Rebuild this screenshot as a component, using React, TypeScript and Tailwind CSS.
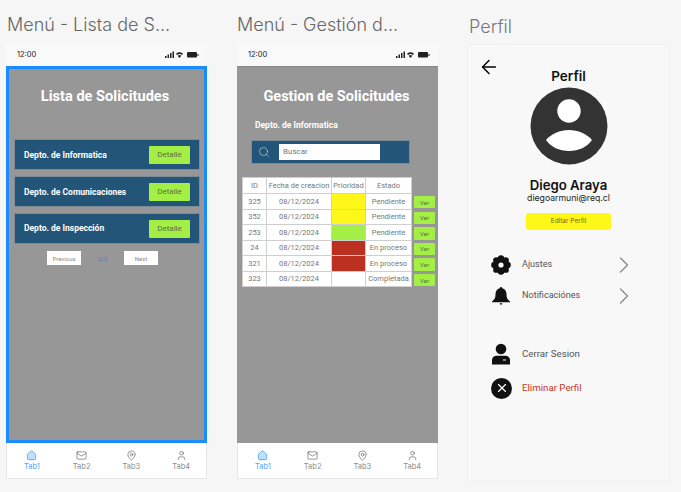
import { ArrowLeft, ChevronRight, House, Mail, MapPin, Search, User, X } from "lucide-react";

const FILAS = [
  { id: "325", prioridad: "bg-[#fff71a]", estado: "Pendiente" },
  { id: "352", prioridad: "bg-[#fff71a]", estado: "Pendiente" },
  { id: "253", prioridad: "bg-[#a3ef45]", estado: "Pendiente" },
  { id: "24", prioridad: "bg-[#bb3021]", estado: "En proceso" },
  { id: "321", prioridad: "bg-[#bb3021]", estado: "En proceso" },
  { id: "323", prioridad: "bg-white", estado: "Completada" },
];

const DEPTOS = ["Depto. de Informatica", "Depto. de Comunicaciones", "Depto. de Inspección"];

const TABS = [
  { label: "Tab1", Icon: House },
  { label: "Tab2", Icon: Mail },
  { label: "Tab3", Icon: MapPin },
  { label: "Tab4", Icon: User },
];

function StatusBar() {
  return (
    <div className="flex h-[22px] items-center justify-between bg-[#f9f9f9] pl-[11px] pr-[8px] font-['Inter',sans-serif] text-[7.5px] text-[#222]">
      <span>12:00</span>
      <svg width="34" height="8" viewBox="0 0 34 8" fill="#222" aria-hidden>
        <rect x="0" y="5" width="1.5" height="2" />
        <rect x="2.5" y="3.5" width="1.5" height="3.5" />
        <rect x="5" y="2" width="1.5" height="5" />
        <rect x="7.5" y="0.5" width="1.5" height="6.5" />
        <path d="M11 2.8a5.5 5.5 0 0 1 7 0l-1 1.1a4 4 0 0 0-5 0zM12.7 4.700a3 3 0 0 1 3.600 0L14.500 7z" />
        <rect x="22" y="1" width="10" height="5.5" rx="1" />
        <rect x="32.5" y="3" width="1" height="2" />
      </svg>
    </div>
  );
}

function TabBar() {
  return (
    <div className="flex h-[36px] items-start border-x border-b border-[#e6e6e6] bg-white pt-[7px] font-['Inter',sans-serif] text-[7.5px] leading-[10px] text-[#8c8c8c]">
      {TABS.map(({ label, Icon }, i) => (
        <div key={label} className={i === 0 ? "flex w-[50px] flex-col items-center gap-[1px] text-[#4aa5ff]" : "flex w-[50px] flex-col items-center gap-[1px]"}>
          <Icon
            size={11}
            strokeWidth={1.3}
            className={i === 0 ? "fill-[#bfdfff] text-[#1890ff]" : "text-[#555]"}
          />
          <span>{label}</span>
        </div>
      ))}
    </div>
  );
}

function ListaFrame() {
  return (
    <div className="w-[201px] shrink-0">
      <h2 className="h-[44px] pl-[1px] pt-[12px] text-[18px] leading-[26px] font-light text-[#666]">Menú - Lista de S...</h2>
      <StatusBar />
      <div className="h-[377px] border-[3px] border-[#1a8cff] bg-[#979797] font-['Roboto',sans-serif]">
        <h1 className="pt-[19px] pr-[3px] text-center text-[14.6px] leading-[17px] font-bold text-white">Lista de Solicitudes</h1>
        <div className="mt-[34px] flex flex-col gap-[6px] pl-[5px] pr-[4px]">
          {DEPTOS.map((d, i) => (
            <div key={d} className="flex h-[31px] items-center justify-between border border-[#7d8b95] bg-[#235578] pl-[9px] pr-[9px]">
              <span className={i < 2 ? "pt-[2px] text-[8.5px] font-bold text-white" : "text-[8.5px] font-bold text-white"}>{d}</span>
              <button type="button" className="h-[18px] w-[41px] rounded-[1px] bg-[#a3ef45] text-[8px] text-[#5a7040]">
                Detalle
              </button>
            </div>
          ))}
        </div>
        <div className="mt-[7px] flex items-center pl-[38px] text-[6px] text-[#888]">
          <button type="button" className="h-[14px] w-[34px] bg-white">Previous</button>
          <span className="w-[43px] text-center text-[#5a7fae]">2/5</span>
          <button type="button" className="h-[14px] w-[34px] bg-white">Next</button>
        </div>
      </div>
      <TabBar />
    </div>
  );
}

function GestionFrame() {
  return (
    <div className="w-[201px] shrink-0">
      <h2 className="h-[44px] pt-[12px] text-[18px] leading-[26px] font-light text-[#666]">Menú - Gestión d...</h2>
      <StatusBar />
      <div className="h-[377px] border-t border-[#8a8a8a] bg-[#979797] pt-[21px] pl-[5px] font-['Roboto',sans-serif]">
        <h1 className="pr-[7px] text-center text-[14.5px] leading-[17px] font-bold text-white">Gestion de Solicitudes</h1>
        <p className="mt-[15px] pl-[13px] text-[8.5px] leading-[10px] font-bold text-white">Depto. de Informatica</p>
        <div className="mt-[10px] ml-[9px] flex h-[24px] w-[159px] items-center border border-[#7d8b95] bg-[#235578] pl-[6px]">
          <Search size={12} strokeWidth={1.1} className="text-[#dce6ec]" />
          <div className="ml-[9px] flex h-[16px] w-[101px] items-center bg-white pl-[4px] text-[8px] text-[#777]">Buscar</div>
        </div>
        <div className="mt-[13px] flex items-start">
          <table className="w-[169px] table-fixed border-collapse bg-white text-center text-[7.5px] text-[#777]">
            <colgroup>
              <col className="w-[24px]" />
              <col className="w-[65px]" />
              <col className="w-[34px]" />
              <col className="w-[46px]" />
            </colgroup>
            <thead>
              <tr className="h-[16px]">
                {["ID", "Fecha de creacion", "Prioridad", "Estado"].map((h) => (
                  <th key={h} className="border border-[#cfcfcf] p-0 font-normal whitespace-nowrap">{h}</th>
                ))}
              </tr>
            </thead>
            <tbody>
              {FILAS.map((f) => (
                <tr key={f.id} className="h-[15.5px]">
                  <td className="border border-[#cfcfcf] p-0">{f.id}</td>
                  <td className="border border-[#cfcfcf] p-0">08/12/2024</td>
                  <td className={`border border-[#cfcfcf] p-0 ${f.prioridad}`} />
                  <td className="border border-[#cfcfcf] p-0 whitespace-nowrap">{f.estado}</td>
                </tr>
              ))}
            </tbody>
          </table>
          <div className="mt-[19px] ml-[2px] flex flex-col gap-[3.2px]">
            {FILAS.map((f) => (
              <button key={f.id} type="button" className="h-[12.4px] w-[21px] rounded-[1px] bg-[#a3ef45] text-[6px] text-[#5a7040]">
                Ver
              </button>
            ))}
          </div>
        </div>
      </div>
      <TabBar />
    </div>
  );
}

function Fila({ icon, label, chevron, rojo, className }: { icon: React.ReactNode; label: string; chevron?: boolean; rojo?: boolean; className?: string }) {
  return (
    <div className={`flex items-center ${className ?? ""}`}>
      <div className="flex w-[31px] shrink-0 items-center">{icon}</div>
      <span className={rojo ? "text-[9.7px] text-[#c8352b]" : chevron ? "w-[88px] text-[9.1px] text-[#555]" : "text-[9.7px] text-[#555]"}>{label}</span>
      {chevron && <ChevronRight size={28} strokeWidth={1.1} className="text-[#888]" />}
    </div>
  );
}

function Engrane() {
  const lobulos = [0, 45, 90, 135, 180, 225, 270, 315];
  return (
    <svg width="20" height="20" viewBox="0 0 20 20" aria-hidden>
      <circle cx="10" cy="10" r="7.5" fill="#111" />
      {lobulos.map((a) => (
        <circle
          key={a}
          cx={10 + 6.6 * Math.cos((a * Math.PI) / 180)}
          cy={10 + 6.6 * Math.sin((a * Math.PI) / 180)}
          r="3.2"
          fill="#111"
        />
      ))}
      <circle cx="10" cy="10" r="2.6" fill="#f8f8f8" />
    </svg>
  );
}

function PerfilFrame() {
  return (
    <div className="w-[201px] shrink-0">
      <h2 className="h-[45px] pl-[1px] pt-[14px] text-[18px] leading-[26px] font-light text-[#777]">Perfil</h2>
      <div className="relative h-[436px] bg-[#f8f8f8] font-['Roboto',sans-serif] shadow-[0_0_2px_rgba(0,0,0,0.07)]">
        <ArrowLeft size={22} strokeWidth={1.6} className="absolute top-[11px] left-[10px] text-black" />
        <div className="flex flex-col items-center pt-[23px]">
          <h3 className="font-['Inter',sans-serif] text-[13.5px] leading-[16px] font-semibold text-[#111]">Perfil</h3>
          <svg width="78" height="78" viewBox="0 0 78 78" className="mt-[3px]" aria-hidden>
            <circle cx="39" cy="39" r="38.5" fill="#333" />
            <circle cx="39" cy="24" r="11.7" fill="#fff" />
            <path d="M16 53c5-6 14-10 23-10s18 4 23 10c-5 7-13 11-23 11s-18-4-23-11z" fill="#fff" />
          </svg>
          <p className="mt-[13px] font-['Inter',sans-serif] text-[13.2px] leading-[15px] font-semibold text-[#111]">Diego Araya</p>
          <p className="font-['Inter',sans-serif] text-[8.7px] leading-[10px] font-normal text-[#222]">diegoarmuni@req.cl</p>
          <button type="button" className="mt-[10px] h-[17px] w-[85px] rounded-[3px] bg-[#fff71a] font-['Inter',sans-serif] text-[6.5px] text-[#6b6b1d]">
            Editar Perfil
          </button>
        </div>
        <div className="pl-[23px]">
          <Fila className="mt-[23px] h-[24px]" label="Ajustes" chevron icon={<Engrane />} />
          <Fila
            className="mt-[7px] h-[24px]"
            label="Notificaciónes"
            chevron
            icon={
              <svg width="20" height="20" viewBox="0 0 20 20" aria-hidden>
                <path fill="#111" d="M10 1a1.200 1.200 0 0 1 1.200 1.200c3 .6 4.300 3.100 4.300 6 0 3.600.9 5.300 3.500 7.300v.8H1v-.8c2.600-2 3.500-3.700 3.500-7.300 0-2.900 1.300-5.400 4.300-6A1.200 1.200 0 0 1 10 1zM8.700 17.300h2.600A1.400 1.400 0 0 1 10 18.800a1.400 1.400 0 0 1-1.300-1.500z" />
              </svg>
            }
          />
          <Fila
            className="mt-[35px] h-[22px]"
            label="Cerrar Sesion"
            icon={
              <svg width="20" height="22" viewBox="0 0 20 22" aria-hidden>
                <circle cx="10" cy="6" r="5.300" fill="#111" />
                <path fill="#111" fillRule="evenodd" d="M1 21.500v-4.500c0-2.500 2-4.300 4.500-4.300h9c2.500 0 4.500 1.800 4.500 4.300v4.500zM12 16.500v1h3v-1z" />
              </svg>
            }
          />
          <Fila
            className="mt-[12px] h-[22px]"
            label="Eliminar Perfil"
            rojo
            icon={
              <span className="flex size-[21px] items-center justify-center rounded-full bg-[#111]">
                <X size={14} strokeWidth={2} className="text-white" />
              </span>
            }
          />
        </div>
      </div>
    </div>
  );
}

export default function App() {
  return (
    <div className="flex h-[492px] w-[681px] gap-[30px] overflow-hidden bg-[#f6f6f6] pl-[6px] font-['Inter',sans-serif]">
      <ListaFrame />
      <GestionFrame />
      <PerfilFrame />
    </div>
  );
}
